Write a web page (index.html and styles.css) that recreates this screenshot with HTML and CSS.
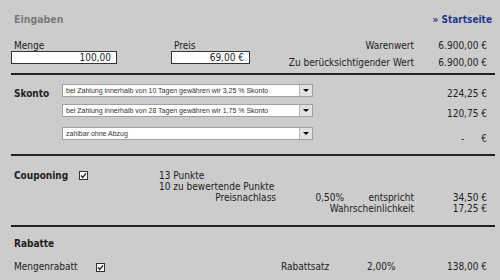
FILE: index.html
```html
<!DOCTYPE html>
<html lang="de">
<head>
    <meta charset="UTF-8">
    <meta name="viewport" content="width=device-width, initial-scale=1.0">
    <title>Eingaben</title>
    <link rel="stylesheet" href="styles.css">
</head>
<body>
    <div class="page">
        <!-- Kopfzeile -->
        <header class="top">
            <h1>Eingaben</h1>
            <a class="home" href="#">» Startseite</a>
        </header>

        <!-- Menge / Preis -->
        <section class="block amounts">
            <div class="field field-qty">
                <label>Menge</label>
                <div class="input">100,00</div>
            </div>
            <div class="field field-price">
                <label>Preis</label>
                <div class="input">69,00 €</div>
            </div>
            <div class="totals">
                <span>Warenwert</span><span>6.900,00 €</span>
                <span>Zu berücksichtigender Wert</span><span>6.900,00 €</span>
            </div>
        </section>

        <!-- Skonto -->
        <section class="block skonto">
            <div class="skonto-row">
                <span class="row-label">Skonto</span>
                <div class="select">
                    <span class="select-text">bei Zahlung innerhalb von 10 Tagen gewähren wir 3,25 % Skonto</span>
                    <span class="select-btn"><i></i></span>
                </div>
                <span class="amount">224,25 €</span>
            </div>
            <div class="skonto-row">
                <span class="row-label"></span>
                <div class="select">
                    <span class="select-text">bei Zahlung innerhalb von 28 Tagen gewähren wir 1,75 % Skonto</span>
                    <span class="select-btn"><i></i></span>
                </div>
                <span class="amount">120,75 €</span>
            </div>
            <div class="skonto-row skonto-last">
                <span class="row-label"></span>
                <div class="select">
                    <span class="select-text">zahlbar ohne Abzug</span>
                    <span class="select-btn"><i></i></span>
                </div>
                <span class="amount amount-empty"><span>-</span><span>€</span></span>
            </div>
        </section>

        <!-- Couponing -->
        <section class="block coupon">
            <span class="row-label">Couponing</span>
            <span class="check"><svg width="7" height="7" viewBox="0 0 7 7"><path d="M1 3.6 L2.8 5.4 L6 1.4" fill="none" stroke="#222" stroke-width="1.4"/></svg></span>
            <span class="wide">13 Punkte</span>
            <span class="wide">10 zu bewertende Punkte</span>
            <span class="c3">Preisnachlass</span>
            <span class="c4">0,50%</span>
            <span class="c5">entspricht</span>
            <span class="c6">34,50 €</span>
            <span class="c45">Wahrscheinlichkeit</span>
            <span class="c6">17,25 €</span>
        </section>

        <!-- Rabatte -->
        <section class="rabatte">
            <h2>Rabatte</h2>
            <div class="rabatt-row">
                <span class="plain-label">Mengenrabatt</span>
                <span class="check"><svg width="7" height="7" viewBox="0 0 7 7"><path d="M1 3.6 L2.8 5.4 L6 1.4" fill="none" stroke="#222" stroke-width="1.4"/></svg></span>
                <span>Rabattsatz</span>
                <span>2,00%</span>
                <span class="value">138,00 €</span>
            </div>
        </section>
    </div>
</body>
</html>
```

FILE: styles.css
```css
/* Grundlayout */
body {
    margin: 0;
    background-color: #cccccc;
    color: #222;
    font-family: "DejaVu Sans Condensed", "DejaVu Sans", sans-serif;
    font-size: 10px;
}
.page {
    padding: 0 5px 0 11px;
}
.top {
    height: 38px;
    padding: 0 3px 2px 3px;
    display: flex;
    align-items: center;
    justify-content: space-between;
}
.top h1 {
    margin: 0;
    font-size: 10.5px;
    color: #7a7a7a;
}
.home {
    color: #1c3a8c;
    font-weight: bold;
    text-decoration: none;
}
.block {
    border-bottom: 2px solid #222;
}

/* Menge / Preis */
.amounts {
    display: flex;
    height: 33px;
}
.field label {
    display: block;
    padding-left: 3px;
    line-height: 11px;
}
.field-qty {
    width: 160px;
}
.field-qty .input {
    width: 106px;
}
.field-price .input {
    width: 79px;
}
.input {
    box-sizing: border-box;
    height: 13px;
    border: 1px solid #333;
    background: #fff;
    text-align: right;
    padding-right: 5px;
    line-height: 11px;
}
.totals {
    margin-left: auto;
    display: grid;
    grid-template-columns: auto 73px;
    line-height: 12px;
    text-align: right;
    padding-right: 8px;
}

/* Skonto */
.skonto {
    padding: 9px 8px 14px 0;
}
.skonto-row {
    display: flex;
    align-items: center;
    height: 13px;
    margin-bottom: 7px;
}
.skonto-row:nth-child(2) {
    margin-bottom: 10px;
}
.skonto-last {
    margin-bottom: 0;
}
.row-label {
    width: 51px;
    padding-left: 3px;
    box-sizing: border-box;
    font-weight: bold;
}
.skonto .row-label,
.skonto .amount {
    padding-top: 5px;
}
.select {
    box-sizing: border-box;
    width: 251px;
    height: 13px;
    display: flex;
    border: 1px solid #a0a0a0;
    background: #fff;
}
.select-text {
    flex: 1;
    padding-left: 3px;
    font-family: "Liberation Sans", Arial, sans-serif;
    font-size: 7px;
    line-height: 11px;
    color: #333;
    white-space: nowrap;
    overflow: hidden;
}
.select-btn {
    width: 12px;
    border-left: 1px solid #b4b4b4;
    background: #e2e2e2;
    display: flex;
    align-items: center;
    justify-content: center;
}
.select-btn i {
    border-left: 3px solid transparent;
    border-right: 3px solid transparent;
    border-top: 3px solid #000;
}
.amount {
    margin-left: auto;
    width: 73px;
    text-align: right;
}
.skonto-last .amount {
    padding-top: 9px;
}
.amount-empty {
    display: flex;
    justify-content: flex-end;
    gap: 17px;
}

/* Couponing */
.coupon {
    display: grid;
    grid-template-columns: 68px 80px 117px 68px 70px 73px;
    grid-auto-rows: 11px;
    line-height: 11px;
    padding: 14px 8px 11px 0;
}
.coupon .row-label {
    width: auto;
}
.check {
    box-sizing: border-box;
    width: 9px;
    height: 9px;
    margin-top: 1px;
    border: 1px solid #333;
    background: #fff;
    display: flex;
    align-items: center;
    justify-content: center;
}
.wide {
    grid-column: 3 / 7;
}
.c3 { grid-column: 3; text-align: right; }
.c4 { grid-column: 4; text-align: right; }
.c5 { grid-column: 5; text-align: right; }
.c6 { grid-column: 6; text-align: right; }
.c45 { grid-column: 4 / 6; text-align: right; }

/* Rabatte */
.rabatte {
    padding: 10px 8px 0 0;
}
.rabatte h2 {
    margin: 0 0 10px;
    padding-left: 3px;
    font-size: 10px;
    line-height: 14px;
}
.rabatt-row {
    display: grid;
    grid-template-columns: 85px 185px 86px 47px 73px;
    align-items: center;
    line-height: 12px;
}
.plain-label {
    padding-left: 3px;
}
.rabatt-row .check {
    margin-top: 0;
}
.value {
    text-align: right;
}
```
